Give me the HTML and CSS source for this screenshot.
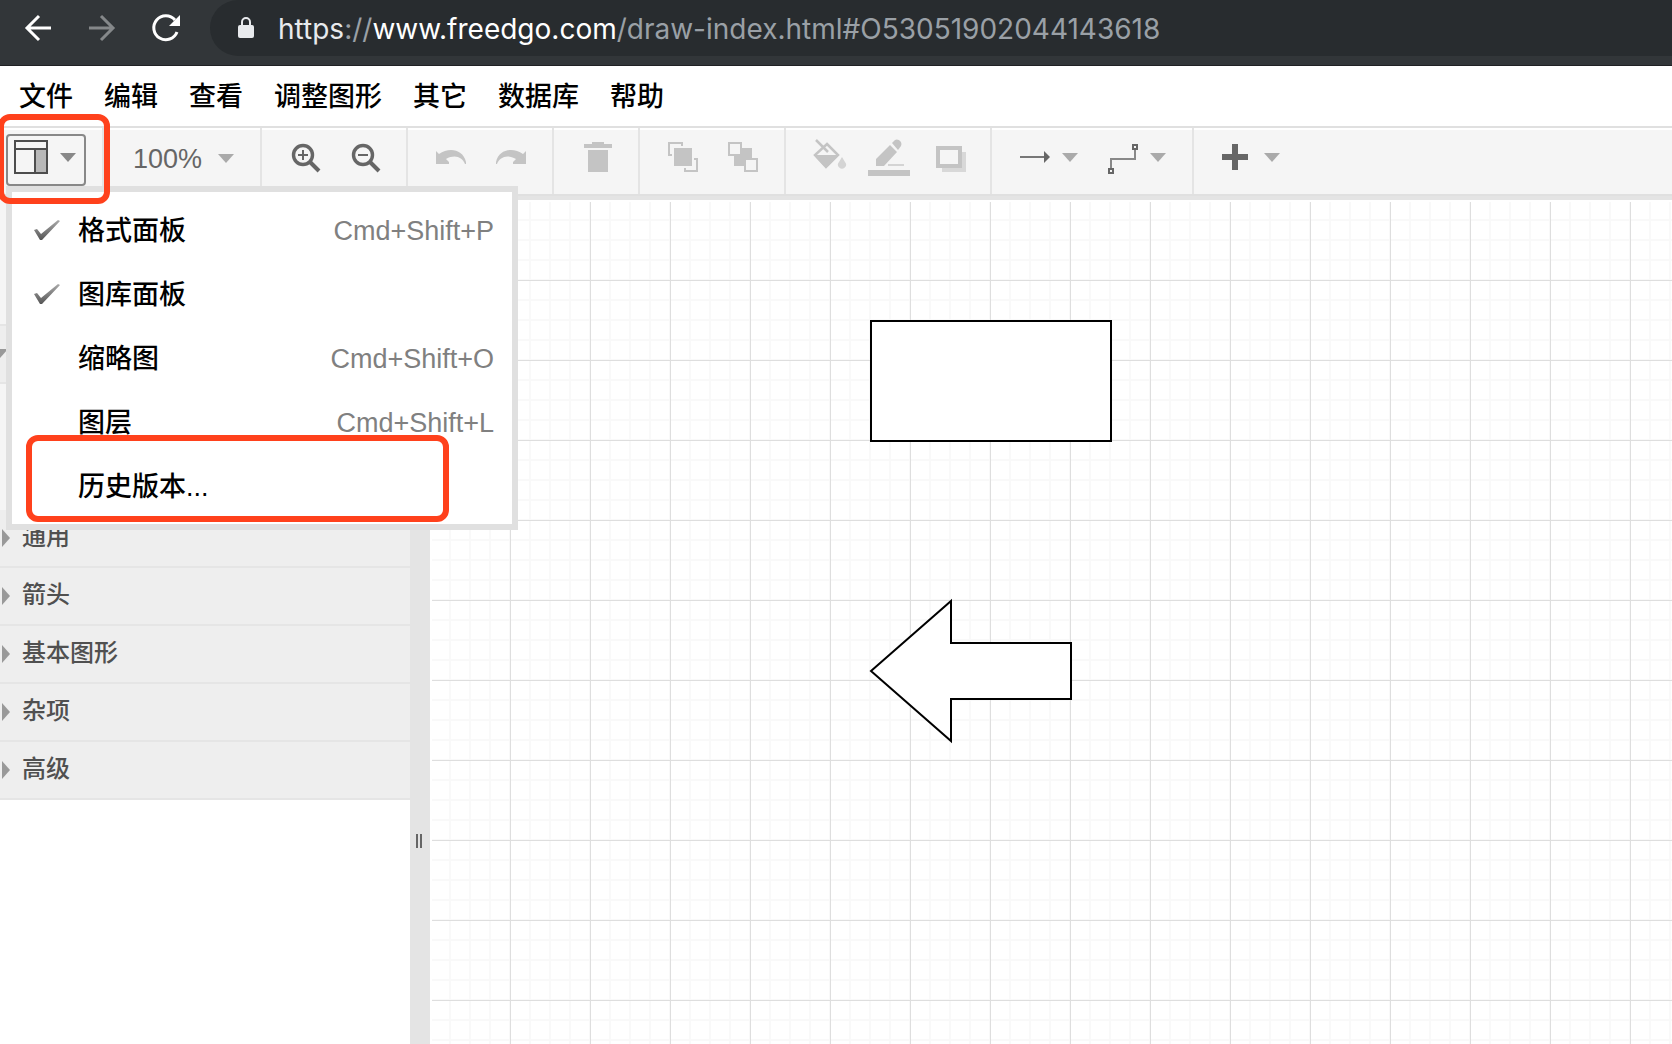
FILE: index.html
```html
<!DOCTYPE html>
<html lang="zh-CN">
<head>
<meta charset="utf-8">
<meta name="viewport" content="width=device-width, initial-scale=1">
<title>Freedgo Draw</title>
<link rel="stylesheet" href="styles.css">
</head>
<body>
<div class="app">
  <header class="browser">
    <div class="browser-nav">
      <button class="nav-button" type="button" aria-label="Back">
        <svg width="64" height="56" viewBox="0 0 64 56" fill="none" stroke="#fff" stroke-width="3"><path d="M51 28H27M39 16L27 28l12 12"/></svg>
      </button>
      <button class="nav-button" type="button" aria-label="Forward">
        <svg width="64" height="56" viewBox="0 0 64 56" fill="none" stroke="#85888a" stroke-width="3"><path d="M25 28h24M37 16l12 12-12 12"/></svg>
      </button>
      <button class="nav-button" type="button" aria-label="Reload">
        <svg width="64" height="56" viewBox="0 0 64 56"><path d="M49 32A12 12 0 1 1 47 20" fill="none" stroke="#fff" stroke-width="3"/><path d="M52 15v11H41z" fill="#fff"/></svg>
      </button>
    </div>
    <div class="address">
      <svg class="lock" width="16" height="22" viewBox="0 0 16 22"><rect y="8" width="16" height="13" rx="2" fill="#e8eaed"/><path d="M4 9V5a4 4 0 0 1 8 0v4" fill="none" stroke="#e8eaed" stroke-width="2"/></svg>
      <div class="url"><span class="url-scheme">https</span>://<span class="url-host">www.freedgo.com</span>/draw-index.html#O53051902044143618</div>
    </div>
  </header>

  <nav class="menubar">
    <button type="button">文件</button>
    <button type="button">编辑</button>
    <button type="button">查看</button>
    <button type="button">调整图形</button>
    <button type="button">其它</button>
    <button type="button">数据库</button>
    <button type="button">帮助</button>
  </nav>

  <div class="toolbar">
    <div class="group group-view">
      <button class="view-button" type="button" aria-label="视图" aria-expanded="true">
        <svg width="36" height="36" viewBox="0 0 36 36"><path d="M22 10h11v23H22z" fill="#b8b8b8"/><path d="M2 2h32v32H2zM2 10h32M22 10v24" fill="none" stroke="#4d4d4d" stroke-width="2"/></svg>
        <svg width="16" height="10" viewBox="0 0 16 10"><path d="M0 1h16L8 10z" fill="#888"/></svg>
      </button>
      <div class="menu" role="menu">
        <button class="menu-item" type="button" role="menuitem">
          <svg class="check" width="28" height="24" viewBox="0 0 28 24"><path d="M2 12l3-1 4 5L26 2l2 1L10 22H8z" fill="url(#check-ink)"/></svg>
          <span>格式面板</span><kbd>Cmd+Shift+P</kbd>
        </button>
        <button class="menu-item" type="button" role="menuitem">
          <svg class="check" width="28" height="24" viewBox="0 0 28 24"><path d="M2 12l3-1 4 5L26 2l2 1L10 22H8z" fill="url(#check-ink)"/></svg>
          <span>图库面板</span>
        </button>
        <button class="menu-item" type="button" role="menuitem"><i class="check"></i><span>缩略图</span><kbd>Cmd+Shift+O</kbd></button>
        <button class="menu-item" type="button" role="menuitem"><i class="check"></i><span>图层</span><kbd>Cmd+Shift+L</kbd></button>
        <button class="menu-item" type="button" role="menuitem"><i class="check"></i><span>历史版本...</span></button>
        <div class="mark mark-history"></div>
      </div>
      <div class="mark mark-view"></div>
    </div>

    <div class="group">
      <button class="tool zoom-level" type="button">100%
        <svg width="16" height="10" viewBox="0 0 16 10"><path d="M0 0h16L8 9z" fill="#aaa"/></svg>
      </button>
    </div>

    <div class="group">
      <button class="tool" type="button" aria-label="放大">
        <svg width="60" height="66" viewBox="0 0 60 66" fill="none" stroke="#666"><circle cx="27" cy="27" r="9.500" stroke-width="3.400"/><path d="M34 34l9 9" stroke-width="4"/><path d="M22 27h10M27 22v10" stroke-width="2"/></svg>
      </button>
      <button class="tool" type="button" aria-label="缩小">
        <svg width="60" height="66" viewBox="0 0 60 66" fill="none" stroke="#666"><circle cx="27" cy="27" r="9.500" stroke-width="3.400"/><path d="M34 34l9 9" stroke-width="4"/><path d="M22 27h10" stroke-width="2"/></svg>
      </button>
    </div>

    <div class="group">
      <button class="tool" type="button" aria-label="撤销" disabled>
        <svg width="60" height="66" viewBox="0 0 60 66" fill="#c4c4c4"><path d="M14 23l3 3c10-7 24-5 27 8v2h-1c-3-7-10-10-19-5l3 3v2H14z"/></svg>
      </button>
      <button class="tool" type="button" aria-label="重做" disabled>
        <svg width="60" height="66" viewBox="0 0 60 66" fill="#c4c4c4"><path d="M44 23l-3 3c-10-7-24-5-27 8v2h1c3-7 10-10 19-5l-3 3v2h13z"/></svg>
      </button>
    </div>

    <div class="group">
      <button class="tool" type="button" aria-label="删除" disabled>
        <svg width="60" height="66" viewBox="0 0 60 66" fill="#c4c4c4"><path d="M16 16h8v-2h12v2h8v4H16zM20 22h20v22H20z"/></svg>
      </button>
    </div>

    <div class="group">
      <button class="tool" type="button" aria-label="置前" disabled>
        <svg width="60" height="66" viewBox="0 0 60 66"><path d="M20 20h18v18H20z" fill="#c4c4c4"/><path d="M18 27h-3V15h13v3M40 31h3v12H31v-3" fill="none" stroke="#c4c4c4" stroke-width="2"/></svg>
      </button>
      <button class="tool" type="button" aria-label="置后" disabled>
        <svg width="60" height="66" viewBox="0 0 60 66"><path d="M20 20h18v18H20z" fill="#c4c4c4"/><path d="M15 15h12v12H15zM31 31h12v12H31z" fill="#f5f5f5" stroke="#c4c4c4" stroke-width="2"/></svg>
      </button>
    </div>

    <div class="group">
      <button class="tool" type="button" aria-label="填充颜色" disabled>
        <svg width="60" height="66" viewBox="0 0 60 66"><path d="M16 12l12 12M27 16l11 11-12 12-11-12z" fill="none" stroke="#c4c4c4" stroke-width="2.500"/><path d="M14 27h25L26 40z" fill="#c4c4c4"/><path d="M42 29l3 5a4 4 0 1 1-6 0z" fill="#d4d4d4"/></svg>
      </button>
      <button class="tool" type="button" aria-label="线条颜色" disabled>
        <svg width="60" height="66" viewBox="0 0 60 66" fill="#c4c4c4"><path d="M16 31l14-14 7 7-13 14h-8zM32 15l3-3c3-2 8 2 6 6l-3 4z"/><path d="M28 36h16v2H28z" fill="#d4d4d4"/><path d="M8 42h42v6H8z"/></svg>
      </button>
      <button class="tool" type="button" aria-label="阴影" disabled>
        <svg width="60" height="66" viewBox="0 0 60 66"><path d="M22 24h24v20H22z" fill="#d8d8d8"/><path d="M18 20h22v18H18z" fill="#f5f5f5" stroke="#c4c4c4" stroke-width="4"/></svg>
      </button>
    </div>

    <div class="group">
      <button class="tool tool-wide" type="button" aria-label="连接">
        <svg width="88" height="66" viewBox="0 0 88 66"><path d="M14 29h25" stroke="#777" stroke-width="2"/><path d="M38 23l6 6-6 6z" fill="#666"/><path d="M56 25h16l-8 9z" fill="#aaa"/></svg>
      </button>
      <button class="tool tool-wide" type="button" aria-label="航点">
        <svg width="88" height="66" viewBox="0 0 88 66"><path d="M17 40V31h24V21" fill="none" stroke="#888" stroke-width="2"/><path d="M15 41h4v4h-4zM39 17h4v4h-4z" fill="#f5f5f5" stroke="#666" stroke-width="2"/><path d="M56 25h16l-8 9z" fill="#aaa"/></svg>
      </button>
    </div>

    <div class="group group-last">
      <button class="tool tool-wide" type="button" aria-label="插入">
        <svg width="88" height="66" viewBox="0 0 88 66"><path d="M14 29h26M27 16v26" stroke="#666" stroke-width="6"/><path d="M56 25h16l-8 9z" fill="#aaa"/></svg>
      </button>
    </div>
  </div>

  <main class="workspace">
    <aside class="sidebar">
      <div class="search-area"></div>
      <button class="section open" type="button" aria-label="便笺本"><svg width="16" height="10" viewBox="0 0 16 10"><path d="M0 0h16L8 9z" fill="#999"/></svg></button>
      <div class="scratchpad"></div>
      <button class="section" type="button"><svg width="10" height="18" viewBox="0 0 10 18"><path d="M2 0l8 9-8 9z" fill="#999"/></svg>通用</button>
      <button class="section" type="button"><svg width="10" height="18" viewBox="0 0 10 18"><path d="M2 0l8 9-8 9z" fill="#999"/></svg>箭头</button>
      <button class="section" type="button"><svg width="10" height="18" viewBox="0 0 10 18"><path d="M2 0l8 9-8 9z" fill="#999"/></svg>基本图形</button>
      <button class="section" type="button"><svg width="10" height="18" viewBox="0 0 10 18"><path d="M2 0l8 9-8 9z" fill="#999"/></svg>杂项</button>
      <button class="section" type="button"><svg width="10" height="18" viewBox="0 0 10 18"><path d="M2 0l8 9-8 9z" fill="#999"/></svg>高级</button>
    </aside>
    <div class="splitter"><div class="grip"></div></div>
    <div class="canvas">
      <svg class="shape shape-box" width="242" height="122" viewBox="0 0 242 122"><path d="M1 1h240v120H1z"/></svg>
      <svg class="shape shape-arrow" width="204" height="146" viewBox="-1 -2 204 146"><path d="M81 1v42h120v56H81v42L1 71z"/></svg>
    </div>
  </main>
</div>
<svg class="defs" width="0" height="0" aria-hidden="true"><linearGradient id="check-ink" x1="0" y1="0" x2="0" y2="1"><stop offset="0" stop-color="#aaa"/><stop offset="1" stop-color="#555"/></linearGradient></svg>
</body>
</html>
```
FILE: styles.css
```css
* {
  box-sizing: border-box;
}

body {
  margin: 0;
  overflow: hidden;
  background: #fff;
  color: #000;
  font-family: "Liberation Sans", "Noto Sans CJK SC", sans-serif;
}

button {
  margin: 0;
  padding: 0;
  border: 0;
  background: none;
  color: inherit;
  font: inherit;
}

svg {
  display: block;
  flex: none;
}

.defs {
  position: absolute;
}

.app {
  display: flex;
  flex-direction: column;
  height: 100vh;
}

/* Browser bar */
.browser {
  display: flex;
  flex: none;
  height: 66px;
  padding-bottom: 9px;
  border-bottom: 1px solid #202124;
  background: #323639;
}

.browser-nav {
  display: flex;
  width: 210px;
}

.address {
  display: flex;
  flex: 1;
  align-items: center;
  gap: 24px;
  padding-left: 28px;
  border-radius: 28px 0 0 28px;
  background: #282c2f;
}

.url {
  padding-top: 2px;
  color: #9aa0a6;
  font-family: Inter, sans-serif;
  font-size: 28px;
  line-height: 36px;
  white-space: nowrap;
}

.url-scheme {
  color: #e8eaed;
}

.url-host {
  color: #fff;
}

/* Menu bar */
.menubar {
  display: flex;
  flex: none;
  align-items: center;
  gap: 31px;
  height: 62px;
  padding: 2px 0 0 19px;
  border-bottom: 2px solid #e0e0e0;
  font-size: 27px;
  font-weight: 500;
  line-height: 40px;
}

/* Toolbar */
.toolbar {
  display: flex;
  flex: none;
  height: 72px;
  border-top: 2px solid #fff;
  border-bottom: 4px solid #e4e4e4;
  background: #f5f5f5;
  box-shadow: inset 0 -2px #e0e0e0;
}

.group {
  display: flex;
  height: 66px;
  margin-top: -2px;
  padding: 0 10px 0 14px;
  border-right: 2px solid #e4e4e4;
}

.group-last {
  border-right: 0;
}

.group-view {
  position: relative;
  width: 104px;
  padding: 6px;
}

.view-button {
  display: flex;
  align-items: center;
  gap: 11px;
  width: 80px;
  height: 52px;
  padding: 0 0 6px 5px;
  border: 2px solid #888;
  border-radius: 4px;
}

.tool {
  width: 60px;
}

.tool-wide {
  width: 88px;
}

.zoom-level {
  display: flex;
  align-items: center;
  gap: 16px;
  width: 132px;
  padding: 0 0 4px 15px;
  color: #666;
  font-size: 27px;
}

/* Drop-down menu */
.menu {
  position: absolute;
  z-index: 2;
  top: 58px;
  left: 6px;
  width: 512px;
  padding: 6px 0;
  border: 6px solid #e0e0e0;
  background: #fff;
}

.menu-item {
  display: flex;
  align-items: center;
  width: 100%;
  height: 64px;
  padding: 0 18px 0 20px;
  font-size: 27px;
  font-weight: 500;
  line-height: 40px;
  text-align: left;
}

.menu-item span,
.menu-item kbd {
  padding-top: 2px;
}

.check {
  width: 28px;
  margin-right: 18px;
}

.menu-item kbd {
  margin-left: auto;
  color: #808080;
  font-family: "Liberation Sans", sans-serif;
  font-size: 27px;
  font-weight: 400;
}

/* Red highlight frames */
.mark {
  position: absolute;
  z-index: 3;
  border: 6px solid #ff411c;
  border-radius: 12px;
  pointer-events: none;
}

.mark-view {
  top: -14px;
  left: -2px;
  width: 112px;
  height: 90px;
}

.mark-history {
  top: 243px;
  left: 14px;
  width: 423px;
  height: 87px;
}

/* Workspace */
.workspace {
  display: flex;
  flex: 1;
  min-height: 0;
}

.sidebar {
  width: 410px;
}

.search-area {
  height: 126px;
  border-bottom: 2px solid #e5e5e5;
  background: #f5f5f5;
}

.scratchpad {
  height: 126px;
  background: #f5f5f5;
}

.section {
  display: flex;
  align-items: center;
  gap: 12px;
  width: 100%;
  height: 58px;
  padding-bottom: 2px;
  border-bottom: 2px solid #e5e5e5;
  background: #eee;
  color: #505050;
  font-size: 24px;
  font-weight: 500;
  line-height: 36px;
}

.section svg {
  margin-top: 2px;
}

.section.open {
  margin-left: -8px;
  width: 418px;
}

.splitter {
  width: 20px;
  padding: 634px 0 0 6px;
  background: #e4e4e4;
}

.grip {
  width: 6px;
  height: 14px;
  border: solid #666;
  border-width: 0 2px;
}

.canvas {
  position: relative;
  flex: 1;
  margin: 2px 0 0 2px;
  overflow: hidden;
  background-color: #fff;
  background-image:
    linear-gradient(90deg, #dedede 1px, transparent 1px),
    linear-gradient(#dedede 1px, transparent 1px),
    linear-gradient(90deg, #f9f9f9 2px, transparent 2px),
    linear-gradient(#f9f9f9 2px, transparent 2px);
  background-position: -2px -2px, -2px -2px, -3px -3px, -3px -3px;
  background-size: 80px 80px, 80px 80px, 20px 20px, 20px 20px;
}

.shape {
  position: absolute;
  fill: #fff;
  stroke: #000;
  stroke-width: 2;
}

.shape-box {
  top: 118px;
  left: 438px;
}

.shape-arrow {
  top: 396px;
  left: 437px;
}
```
